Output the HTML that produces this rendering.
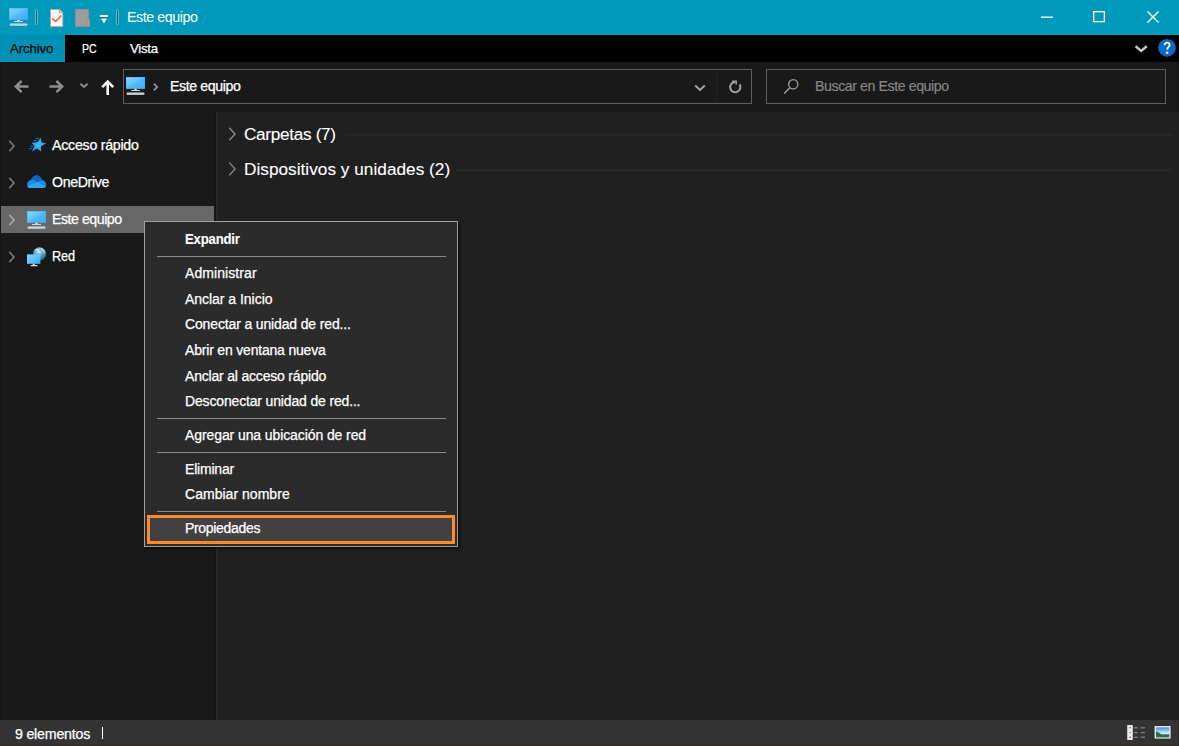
<!DOCTYPE html>
<html><head><meta charset="utf-8">
<style>
*{margin:0;padding:0;box-sizing:border-box}
html,body{width:1179px;height:746px;overflow:hidden;background:#202020;font-family:"Liberation Sans",sans-serif;color:#fff}
.a{position:absolute}
.t{position:absolute;white-space:pre;-webkit-text-stroke:0.25px currentColor}
svg.i{position:absolute;overflow:visible}
</style></head><body>
<svg width="0" height="0" style="position:absolute">
<defs>
<linearGradient id="mg" x1="0" y1="0" x2="1" y2="1"><stop offset="0" stop-color="#86d5fd"/><stop offset="0.5" stop-color="#5ec3fa"/><stop offset="1" stop-color="#36aef6"/></linearGradient>
<linearGradient id="bg1" x1="0" y1="0" x2="0" y2="1"><stop offset="0" stop-color="#dfe7ee"/><stop offset="1" stop-color="#aeb9c2"/></linearGradient>
<symbol id="mon" viewBox="0 0 19 18">
<rect x="0" y="0" width="19" height="11.8" fill="url(#mg)"/>
<path d="M0 11.8 L19 0 V11.8Z" fill="#3fb2f7" opacity="0.5"/>
<rect x="0.3" y="0.3" width="18.4" height="11.2" fill="none" stroke="#3a9ee6" stroke-width="0.6" opacity="0.6"/>
<rect x="8.3" y="11.8" width="2.4" height="1.4" fill="#e4eaee"/>
<rect x="5" y="13" width="9" height="1.1" rx="0.5" fill="#d2dbe1"/>
<rect x="0.5" y="15.4" width="18" height="2.5" rx="1.2" fill="url(#bg1)"/>
</symbol>
</defs></svg>
<div class="a" style="left:0px;top:0px;width:1179px;height:35px;background:#0099bc;"></div>
<svg class="i" style="left:9px;top:8px" width="19" height="18"><use href="#mon"/></svg>
<div class="a" style="left:35px;top:9px;width:3px;height:15.5px;background:#4fb6d3;border-radius:1.5px"></div>
<div class="a" style="left:36px;top:10px;width:1px;height:13.5px;background:#1c5f74;"></div>
<svg class="i" style="left:49.5px;top:8.5px" width="14" height="18" viewBox="0 0 14 18">
<path d="M0.5 0.5 H9.6 L12.8 3.7 V17.6 H0.5Z" fill="#fbfbfb" stroke="#bda59a" stroke-width="0.9"/>
<path d="M9.5 0.6 V3.8 H12.7" fill="#d6d6d6" stroke="#9a9490" stroke-width="0.8"/>
<path d="M2.6 10 L5.6 12.4 L11 7" fill="none" stroke="#f26a24" stroke-width="1.7" stroke-linejoin="round" stroke-linecap="round"/>
</svg>
<svg class="i" style="left:75px;top:8.5px" width="15" height="18" viewBox="0 0 15 18">
<rect x="0.4" y="0.4" width="13.2" height="17.2" fill="#9d9d9d" stroke="#a08a84" stroke-width="0.8"/>
<rect x="12" y="10.5" width="2.6" height="7.1" fill="#a4a4a4" stroke="#a08a84" stroke-width="0.8"/>
</svg>
<svg class="i" style="left:99px;top:14px" width="10" height="10" viewBox="0 0 10 10">
<rect x="0.8" y="1" width="8.2" height="2" fill="#f4f4f4"/>
<rect x="0.8" y="3" width="8.2" height="0.7" fill="#0b4f66" opacity="0.8"/>
<path d="M1.9 4.6 H8 L5 9.6Z" fill="#fff"/>
</svg>
<div class="a" style="left:116px;top:9px;width:3px;height:15.5px;background:#4fb6d3;border-radius:1.5px"></div>
<div class="a" style="left:117px;top:10px;width:1px;height:13.5px;background:#1c5f74;"></div>
<div class="t" style="left:127px;top:8.05px;font-size:14.3px;line-height:18px;color:#fff;font-weight:400;letter-spacing:-0.45px;-webkit-text-stroke:0">Este equipo</div>
<svg class="i" style="left:1030px;top:0px" width="149" height="35" viewBox="0 0 149 35">
<rect x="11" y="16.5" width="12" height="1.3" fill="#fff"/>
<rect x="63.65" y="11.65" width="10.7" height="10" fill="none" stroke="#fff" stroke-width="1.3"/>
<path d="M117.5 11.5 L128.5 22.5 M128.5 11.5 L117.5 22.5" stroke="#fff" stroke-width="1.3"/>
</svg>
<div class="a" style="left:0px;top:35px;width:1179px;height:27px;background:#000;"></div>
<div class="a" style="left:0px;top:35px;width:65px;height:27px;background:#0092b4;"></div>
<div class="t" style="left:10px;top:41.43px;font-size:13.2px;line-height:16px;color:#000;font-weight:400;letter-spacing:-0.1px;">Archivo</div>
<div class="t" style="left:82px;top:41.43px;font-size:13.2px;line-height:16px;color:#fff;font-weight:400;letter-spacing:-0.1px;transform:scaleX(0.8);transform-origin:0 0">PC</div>
<div class="t" style="left:130px;top:41.43px;font-size:13.2px;line-height:16px;color:#fff;font-weight:400;letter-spacing:-0.25px;">Vista</div>
<svg class="i" style="left:1134px;top:43px" width="14" height="10" viewBox="0 0 14 10">
<path d="M1.6 3.2 L7.2 7.9 L12.8 3.2" fill="none" stroke="#c8c8c8" stroke-width="2.5"/>
</svg>
<svg class="i" style="left:1158px;top:39px" width="18" height="18" viewBox="0 0 18 18">
<circle cx="9" cy="8.8" r="8.9" fill="#0a68c8"/>
<path d="M6.6 6.2 C6.6 4.6 7.6 3.6 9.1 3.6 C10.6 3.6 11.6 4.5 11.6 5.9 C11.6 7.9 9.3 8 9.2 10.6" fill="none" stroke="#eef4fb" stroke-width="1.9"/>
<rect x="8.1" y="12.6" width="2.2" height="2.2" fill="#fff"/>
</svg>
<div class="a" style="left:0px;top:62px;width:1179px;height:50px;background:#191919;"></div>
<svg class="i" style="left:0px;top:62px" width="120" height="50" viewBox="0 0 120 50">
<path d="M28.6 24.6 H16 M21.6 19 L15.8 24.6 L21.6 30.2" fill="none" stroke="#8e8e8e" stroke-width="2.5"/>
<path d="M49.4 24.6 H62 M56.4 19 L62.2 24.6 L56.4 30.2" fill="none" stroke="#8e8e8e" stroke-width="2.5"/>
<path d="M80.4 21.8 L84 25 L87.6 21.8" fill="none" stroke="#8a8a8a" stroke-width="2"/>
<path d="M107.7 33 V19.8 M102.2 25.2 L107.7 19.6 L113.2 25.2" fill="none" stroke="#fff" stroke-width="2.6"/>
</svg>
<div class="a" style="left:123px;top:69px;width:629px;height:35px;border:1px solid #5e5e5e;background:#191919"></div>
<div class="a" style="left:716px;top:70px;width:1px;height:33px;background:#222;"></div>
<svg class="i" style="left:126px;top:77px" width="19" height="18"><use href="#mon"/></svg>
<svg class="i" style="left:150px;top:80px" width="12" height="14" viewBox="0 0 12 14">
<path d="M3.9 3.6 L7.2 7 L3.9 10.4" fill="none" stroke="#8e8e8e" stroke-width="1.8"/>
</svg>
<div class="t" style="left:170px;top:77.08px;font-size:14.2px;line-height:18px;color:#fff;font-weight:400;letter-spacing:-0.4px;">Este equipo</div>
<svg class="i" style="left:690px;top:80px" width="60" height="16" viewBox="0 0 60 16">
<path d="M5.2 5.5 L10 10 L14.8 5.5" fill="none" stroke="#a8a8a8" stroke-width="1.8"/>
</svg>
<svg class="i" style="left:727px;top:79px" width="16" height="16" viewBox="0 0 16 16">
<path d="M8.2 3 A5.1 5.1 0 1 0 12.6 5.4" fill="none" stroke="#a4a4a4" stroke-width="2"/>
<path d="M5.2 2.2 H9.2 V5.4" fill="none" stroke="#a4a4a4" stroke-width="1.5"/>
</svg>
<div class="a" style="left:766px;top:69px;width:400px;height:35px;border:1px solid #5e5e5e;background:#191919"></div>
<svg class="i" style="left:783px;top:78px" width="17" height="17" viewBox="0 0 17 17">
<circle cx="10.2" cy="6.3" r="4.6" fill="none" stroke="#a0a0a0" stroke-width="1.3"/>
<path d="M7 9.6 L1.2 15.6" stroke="#a0a0a0" stroke-width="1.4"/>
</svg>
<div class="t" style="left:815px;top:77.08px;font-size:14.2px;line-height:18px;color:#888888;font-weight:400;letter-spacing:-0.43px;-webkit-text-stroke:0.15px #888888">Buscar en Este equipo</div>
<div class="a" style="left:0px;top:112px;width:215px;height:608px;background:#191919;"></div>
<div class="a" style="left:214px;top:112px;width:1.5px;height:608px;background:#151515;"></div>
<div class="a" style="left:215.5px;top:112px;width:2.5px;height:608px;background:#292929;"></div>
<div class="a" style="left:0px;top:206px;width:214px;height:26.5px;background:#676767;"></div>
<svg class="i" style="left:0px;top:139.5px" width="20" height="12" viewBox="0 0 20 12"><path d="M9.3 0.9 L14 6 L9.3 11.1" fill="none" stroke="#747474" stroke-width="1.7"/></svg>
<svg class="i" style="left:0px;top:176.5px" width="20" height="12" viewBox="0 0 20 12"><path d="M9.3 0.9 L14 6 L9.3 11.1" fill="none" stroke="#747474" stroke-width="1.7"/></svg>
<svg class="i" style="left:0px;top:214px" width="20" height="12" viewBox="0 0 20 12"><path d="M9.3 0.9 L14 6 L9.3 11.1" fill="none" stroke="#a6a6a6" stroke-width="1.7"/></svg>
<svg class="i" style="left:0px;top:251px" width="20" height="12" viewBox="0 0 20 12"><path d="M9.3 0.9 L14 6 L9.3 11.1" fill="none" stroke="#747474" stroke-width="1.7"/></svg>
<svg class="i" style="left:24px;top:132px" width="26" height="26" viewBox="0 0 26 26">
<defs><radialGradient id="sg" cx="0.5" cy="0.55" r="0.6"><stop offset="0" stop-color="#3cbaf8"/><stop offset="1" stop-color="#1c90e2"/></radialGradient></defs>
<path d="M16.7 5.4 L17.7 10.4 L22.2 11.2 L16.9 14.4 L17.2 19.6 L12.8 16.6 L8.1 19.6 L10.4 14 L7.6 10.8 L13.2 10.3Z" fill="url(#sg)"/>
<path d="M11.6 6.5 H14.9 M9.4 8.5 H12.9 M6.1 14.3 H9 M4.8 16.7 H8.3" stroke="#1a86d6" stroke-width="1.1" opacity="0.85"/>
</svg>
<svg class="i" style="left:24px;top:170px" width="26" height="26" viewBox="0 0 26 26">
<path d="M5.6 17.9 C3.9 17.9 3 16.4 3 14.6 C3 12.2 4.6 10.3 7 10 C7.9 7.2 10.1 5.6 12.7 5.6 C15.3 5.6 17.2 7.3 18 9.9 C20.4 10.2 22.1 12 22.1 14.3 C22.1 16.5 20.8 17.9 18.6 17.9Z" fill="#1a88e4"/>
<path d="M7 10 C7.9 7.2 10.1 5.6 12.7 5.6 C15.3 5.6 17.2 7.3 18 9.9 L13 12.4 L9.2 9.4Z" fill="#0b67c6"/>
<path d="M3.4 16.6 L13 11.8 L22 16.2 C21.6 17.3 20.4 17.9 18.6 17.9 H5.6 C4.6 17.9 3.8 17.4 3.4 16.6Z" fill="#2ba6f1"/>
</svg>
<svg class="i" style="left:27px;top:211px" width="19" height="18"><use href="#mon"/></svg>
<svg class="i" style="left:22px;top:242px" width="28" height="28" viewBox="0 0 28 28">
<defs><radialGradient id="gl" cx="0.45" cy="0.3" r="0.75"><stop offset="0" stop-color="#b8e2f4"/><stop offset="0.45" stop-color="#5ba8cf"/><stop offset="1" stop-color="#1d5d86"/></radialGradient></defs>
<circle cx="17.5" cy="11.8" r="6.6" fill="url(#gl)"/>
<path d="M13.5 8 C14.8 7 16.5 7.5 16 9.2 C15.5 10.5 17.5 10.8 18.5 10 M19 6.2 C20.5 6.8 22 8.5 22.6 11" fill="none" stroke="#e6f5fc" stroke-width="1.1" opacity="0.75"/>
<rect x="5" y="12.4" width="13.4" height="9.4" fill="url(#mg)"/>
<rect x="10.7" y="21.8" width="2" height="1.4" fill="#dfe6ea"/>
<rect x="8.6" y="23" width="7" height="1.3" rx="0.6" fill="#d2dbe1"/>
</svg>
<div class="t" style="left:52px;top:135.58px;font-size:14.2px;line-height:18px;color:#fff;font-weight:400;letter-spacing:-0.25px;">Acceso rápido</div>
<div class="t" style="left:52px;top:172.58px;font-size:14.2px;line-height:18px;color:#fff;font-weight:400;letter-spacing:-0.368px;">OneDrive</div>
<div class="t" style="left:52px;top:210.08px;font-size:14.2px;line-height:18px;color:#fff;font-weight:400;letter-spacing:-0.48px;">Este equipo</div>
<div class="t" style="left:52px;top:246.58px;font-size:14.2px;line-height:18px;color:#fff;font-weight:400;letter-spacing:-0.15px;transform:scaleX(0.9);transform-origin:0 0">Red</div>
<svg class="i" style="left:226px;top:120px" width="14" height="60" viewBox="0 0 14 60">
<path d="M3.3 7.8 L9 14 L3.3 20.2" fill="none" stroke="#8a8a8a" stroke-width="1.4"/>
<path d="M3.3 42.6 L9 48.9 L3.3 55.2" fill="none" stroke="#8a8a8a" stroke-width="1.4"/>
</svg>
<div class="t" style="left:244px;top:123.04px;font-size:17.2px;line-height:22px;color:#fff;font-weight:400;letter-spacing:-0.317px;-webkit-text-stroke:0.1px #fff">Carpetas (7)</div>
<div class="t" style="left:244px;top:158.04px;font-size:17.2px;line-height:22px;color:#fff;font-weight:400;letter-spacing:0.029px;-webkit-text-stroke:0.1px #fff">Dispositivos y unidades (2)</div>
<div class="a" style="left:345px;top:134px;width:827px;height:2px;background:#272727;"></div>
<div class="a" style="left:458px;top:169px;width:714px;height:2px;background:#272727;"></div>
<div class="a" style="left:0px;top:720px;width:1179px;height:26px;background:#333333;"></div>
<div class="t" style="left:15px;top:725.08px;font-size:14.2px;line-height:18px;color:#fff;font-weight:400;letter-spacing:-0.2px;">9 elementos</div>
<div class="a" style="left:101.8px;top:727px;width:1.5px;height:12.4px;background:#fff;"></div>
<svg class="i" style="left:1124px;top:722px" width="55" height="22" viewBox="0 0 55 22">
<defs><linearGradient id="sky" x1="0" y1="0" x2="0" y2="1"><stop offset="0" stop-color="#3f8fe0"/><stop offset="0.6" stop-color="#d6ecf8"/><stop offset="1" stop-color="#2a6fc0"/></linearGradient></defs>
<rect x="3.2" y="3" width="5.6" height="15" fill="#d8d8d8"/>
<rect x="3.8" y="3.6" width="4.4" height="4.2" fill="#f2f2f2"/><rect x="5.3" y="5.1" width="1.6" height="1.2" fill="#3c7a50"/>
<rect x="3.8" y="8.4" width="4.4" height="4.2" fill="#f2f2f2"/><rect x="5.3" y="9.9" width="1.6" height="1.2" fill="#4f8fe0"/>
<rect x="3.8" y="13.2" width="4.4" height="4.2" fill="#f2f2f2"/><rect x="5.3" y="14.6" width="1.6" height="1.4" fill="#e04848"/>
<rect x="9.8" y="5.1" width="4" height="1.4" fill="#7a7a7a"/><rect x="16.8" y="5.1" width="4.2" height="1.4" fill="#7a7a7a"/>
<rect x="9.8" y="9.9" width="4" height="1.4" fill="#7a7a7a"/><rect x="16.8" y="9.9" width="4.2" height="1.4" fill="#7a7a7a"/>
<rect x="9.8" y="14.6" width="4" height="1.4" fill="#7a7a7a"/><rect x="16.8" y="14.6" width="4.2" height="1.4" fill="#7a7a7a"/>
<rect x="30.6" y="4" width="16" height="12.6" fill="#e8e8e8"/>
<rect x="32" y="5.4" width="13.2" height="9.8" fill="url(#sky)"/>
<path d="M32 9.5 C34 9.8 35.5 11 37 12.2 C39 12.8 42 12.6 45.2 12.3 V15.2 H32Z" fill="#2e6a48"/>
</svg>
<div class="a" style="left:144px;top:221px;width:314px;height:326px;background:#2b2b2b;border:1px solid #a0a0a0;box-shadow:2px 2px 2px rgba(0,0,0,0.55)"></div>
<div class="a" style="left:157px;top:256px;width:289px;height:1px;background:#8a8a8a;"></div>
<div class="a" style="left:157px;top:418px;width:289px;height:1px;background:#8a8a8a;"></div>
<div class="a" style="left:157px;top:452px;width:289px;height:1px;background:#8a8a8a;"></div>
<div class="a" style="left:157px;top:511px;width:289px;height:1px;background:#8a8a8a;"></div>
<div class="a" style="left:147px;top:515px;width:308px;height:29px;border:3px solid #ff8a2a;background:#414141"></div>
<div class="t" style="left:185px;top:230.15px;font-size:14px;line-height:18px;color:#fff;font-weight:700;letter-spacing:-0.214px;-webkit-text-stroke:0.1px #fff;transform:scaleX(0.94);transform-origin:0 0">Expandir</div>
<div class="t" style="left:185px;top:264.15px;font-size:14px;line-height:18px;color:#fff;font-weight:400;letter-spacing:0.08px;">Administrar</div>
<div class="t" style="left:185px;top:289.65px;font-size:14px;line-height:18px;color:#fff;font-weight:400;letter-spacing:-0.031px;">Anclar a Inicio</div>
<div class="t" style="left:185px;top:315.15px;font-size:14px;line-height:18px;color:#fff;font-weight:400;letter-spacing:-0.144px;">Conectar a unidad de red...</div>
<div class="t" style="left:185px;top:341.15px;font-size:14px;line-height:18px;color:#fff;font-weight:400;letter-spacing:-0.188px;">Abrir en ventana nueva</div>
<div class="t" style="left:185px;top:366.65px;font-size:14px;line-height:18px;color:#fff;font-weight:400;letter-spacing:-0.191px;">Anclar al acceso rápido</div>
<div class="t" style="left:185px;top:392.15px;font-size:14px;line-height:18px;color:#fff;font-weight:400;letter-spacing:-0.158px;">Desconectar unidad de red...</div>
<div class="t" style="left:185px;top:426.15px;font-size:14px;line-height:18px;color:#fff;font-weight:400;letter-spacing:-0.094px;">Agregar una ubicación de red</div>
<div class="t" style="left:185px;top:459.65px;font-size:14px;line-height:18px;color:#fff;font-weight:400;letter-spacing:-0.2px;">Eliminar</div>
<div class="t" style="left:185px;top:485.15px;font-size:14px;line-height:18px;color:#fff;font-weight:400;letter-spacing:0.031px;">Cambiar nombre</div>
<div class="t" style="left:185px;top:519.15px;font-size:14px;line-height:18px;color:#fff;font-weight:400;letter-spacing:-0.32px;">Propiedades</div>
<div class="a" style="left:0px;top:62px;width:1px;height:658px;background:#181310;"></div>
<div class="a" style="left:0px;top:720px;width:1px;height:26px;background:#382f2d;"></div>
<div class="a" style="left:0px;top:745px;width:1179px;height:1px;background:#2e2826;"></div>
<div class="a" style="left:1178px;top:62px;width:1px;height:684px;background:rgba(0,0,0,0.18);"></div>
</body></html>
